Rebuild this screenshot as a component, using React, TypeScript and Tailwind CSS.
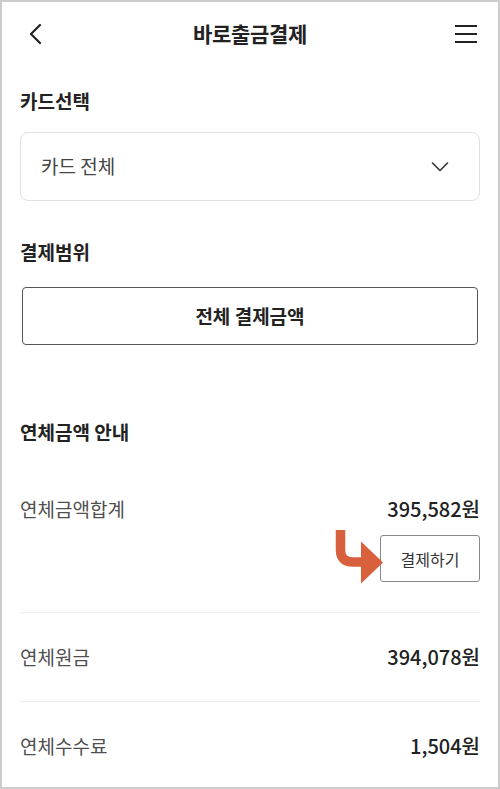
import React from 'react';

const FONT = { fontFamily: '"Noto Sans CJK KR", "Noto Sans", sans-serif' };

const Divider = () => <div className="h-px bg-[#ececec]" />;

export default function App() {
    return (
        <div className="w-[500px] h-[789px] bg-white border-2 border-[#cccccc] overflow-hidden text-[#222]" style={FONT}>
            {/* Header */}
            <div className="h-[64px] flex items-center justify-between pl-[24px] pr-[20px]">
                <svg width="20" height="24" viewBox="0 0 20 24" fill="none" stroke="#222" strokeWidth="2.2" strokeLinecap="round" strokeLinejoin="round">
                    <path d="M14 3 L5 12 L14 21" />
                </svg>
                <div className="text-[21px] font-bold tracking-[-0.3px]">바로출금결제</div>
                <svg width="24" height="20" viewBox="0 0 24 20" fill="none" stroke="#222" strokeWidth="2.2">
                    <path d="M1 2 H23 M1 10 H23 M1 18 H23" />
                </svg>
            </div>

            <div className="px-[18px]">
                {/* 카드선택 */}
                <div className="mt-[21px] text-[19px] leading-[28px] font-bold">카드선택</div>
                <div className="mt-[17px] h-[69px] rounded-[8px] border border-[#e2e2e2] flex items-center justify-between pl-[20px] pr-[30px]">
                    <span className="text-[19px] text-[#444]">카드 전체</span>
                    <svg width="18" height="12" viewBox="0 0 18 12" fill="none" stroke="#333" strokeWidth="1.6" strokeLinecap="round" strokeLinejoin="round">
                        <path d="M1.5 2 L9 9.5 L16.5 2" />
                    </svg>
                </div>

                {/* 결제범위 */}
                <div className="mt-[37px] text-[19px] leading-[28px] font-bold">결제범위</div>
                <div className="mt-[21px] mx-[2px] h-[58px] rounded-[4px] border border-[#555] flex items-center justify-center text-[19px] font-bold">
                    전체 결제금액
                </div>

                {/* 연체금액 안내 */}
                <div className="mt-[73px] text-[19px] leading-[28px] font-bold">연체금액 안내</div>

                <div className="pt-[49px] pb-[30px] flex justify-between items-start">
                    <span className="text-[19px] leading-[28px] text-[#4f4f4f]">연체금액합계</span>
                    <div className="flex flex-col items-end">
                        <span className="text-[20px] leading-[28px] font-medium">395,582원</span>
                        <div className="mt-[12px] flex items-start">
                            <svg width="56" height="47" viewBox="0 0 56 47" className="-mt-[5px] -mr-[5px] relative z-10 overflow-visible">
                                <path d="M11.5 0 V20 Q11.5 32 24 32 H36" fill="none" stroke="#d9603c" strokeWidth="9.5" />
                                <polygon points="32,11.5 54,32.5 32,53.5" fill="#d9603c" />
                            </svg>
                            <div className="w-[100px] h-[47px] rounded-[3px] border border-[#8a8a8a] bg-white flex items-center justify-center text-[16px] text-[#333]">
                                결제하기
                            </div>
                        </div>
                    </div>
                </div>
                <Divider />
                <div className="py-[30px] flex justify-between items-center">
                    <span className="text-[19px] leading-[28px] text-[#4f4f4f]">연체원금</span>
                    <span className="text-[20px] leading-[28px] font-medium">394,078원</span>
                </div>
                <Divider />
                <div className="py-[30px] flex justify-between items-center">
                    <span className="text-[19px] leading-[28px] text-[#4f4f4f]">연체수수료</span>
                    <span className="text-[20px] leading-[28px] font-medium">1,504원</span>
                </div>
            </div>
        </div>
    );
}
